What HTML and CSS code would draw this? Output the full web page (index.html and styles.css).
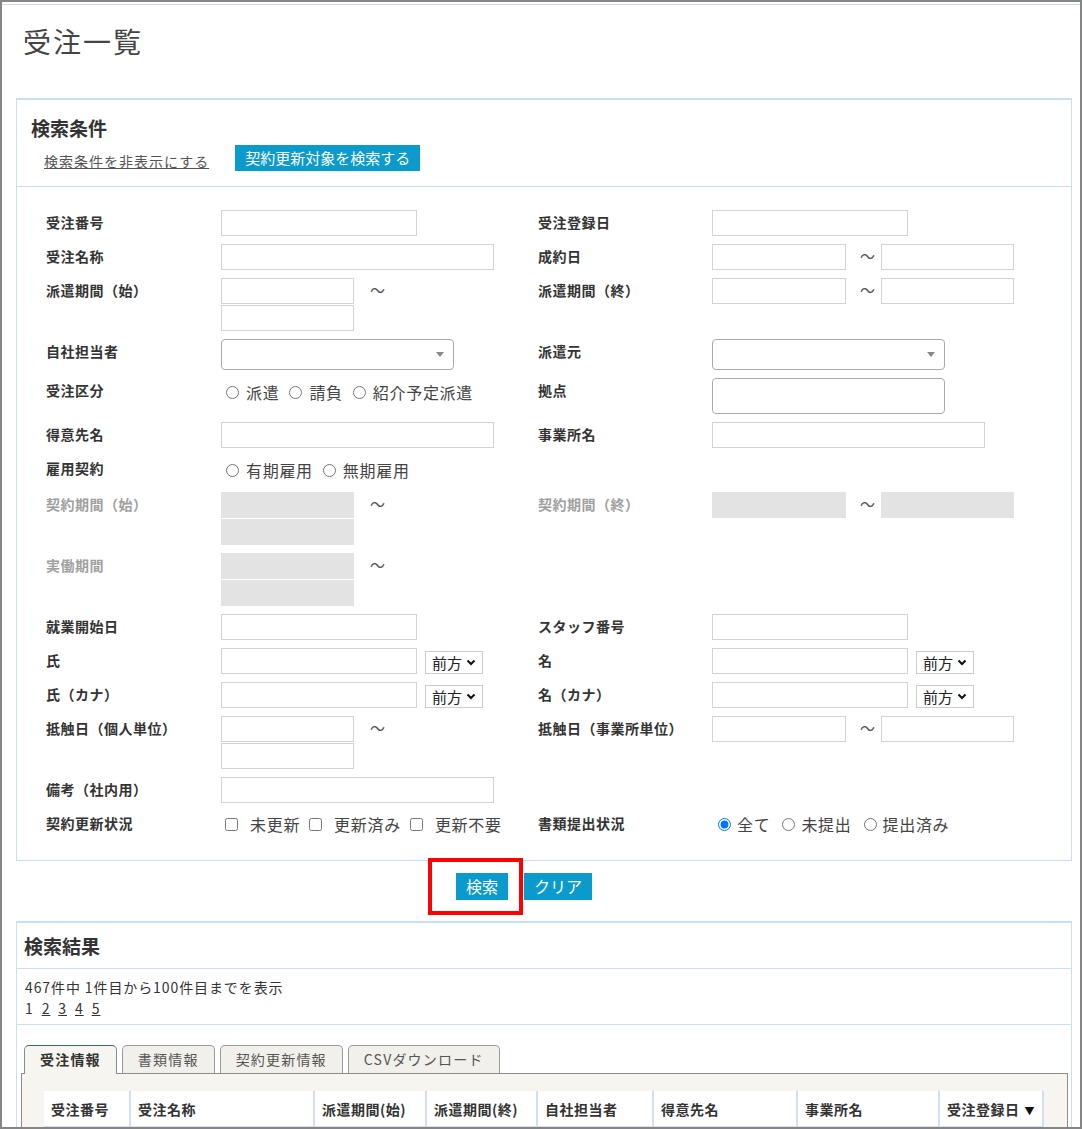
FILE: index.html
```html
<!DOCTYPE html>
<html lang="ja">
<head>
    <meta charset="UTF-8">
    <meta name="viewport" content="width=device-width, initial-scale=1.0">
    <title>受注一覧</title>
    <link rel="stylesheet" href="styles.css">
</head>
<body>
    <div class="frame">
        <div class="page">
            <h1 class="page-title">受注一覧</h1>

            <!-- 検索条件 -->
            <div class="panel">
                <div class="panel-head">
                    <h2 class="panel-title">検索条件</h2>
                    <div class="toolbar">
                        <a href="#" class="toggle-link">検索条件を非表示にする</a>
                        <button class="btn btn-sm">契約更新対象を検索する</button>
                    </div>
                </div>

                <div class="panel-body">
                    <table class="cond">
                        <colgroup>
                            <col class="c-label">
                            <col class="c-field">
                            <col class="c-label2">
                            <col>
                        </colgroup>
                        <tr>
                            <th>受注番号</th>
                            <td><input type="text" class="text w-short"></td>
                            <th>受注登録日</th>
                            <td><input type="text" class="text w-short"></td>
                        </tr>
                        <tr>
                            <th>受注名称</th>
                            <td><input type="text" class="text w-long"></td>
                            <th>成約日</th>
                            <td>
                                <div class="range">
                                    <input type="text" class="text w-date1">
                                    <span class="tilde">～</span>
                                    <input type="text" class="text w-date">
                                </div>
                            </td>
                        </tr>
                        <tr>
                            <th>派遣期間（始）</th>
                            <td>
                                <div class="range stack">
                                    <input type="text" class="text w-date">
                                    <span class="tilde">～</span>
                                    <input type="text" class="text w-date">
                                </div>
                            </td>
                            <th>派遣期間（終）</th>
                            <td>
                                <div class="range">
                                    <input type="text" class="text w-date1">
                                    <span class="tilde">～</span>
                                    <input type="text" class="text w-date">
                                </div>
                            </td>
                        </tr>
                        <tr>
                            <th>自社担当者</th>
                            <td><div class="pick"></div></td>
                            <th>派遣元</th>
                            <td><div class="pick"></div></td>
                        </tr>
                        <tr>
                            <th>受注区分</th>
                            <td>
                                <div class="opts">
                                    <label class="opt"><input type="radio" name="kubun">派遣</label>
                                    <label class="opt"><input type="radio" name="kubun">請負</label>
                                    <label class="opt"><input type="radio" name="kubun">紹介予定派遣</label>
                                </div>
                            </td>
                            <th>拠点</th>
                            <td><input type="text" class="text w-pick"></td>
                        </tr>
                        <tr>
                            <th>得意先名</th>
                            <td><input type="text" class="text w-long"></td>
                            <th>事業所名</th>
                            <td><input type="text" class="text w-long"></td>
                        </tr>
                        <tr>
                            <th>雇用契約</th>
                            <td>
                                <div class="opts">
                                    <label class="opt"><input type="radio" name="koyo">有期雇用</label>
                                    <label class="opt"><input type="radio" name="koyo">無期雇用</label>
                                </div>
                            </td>
                            <td colspan="2"></td>
                        </tr>
                        <tr>
                            <th class="off">契約期間（始）</th>
                            <td>
                                <div class="range stack">
                                    <input type="text" class="text w-date" disabled>
                                    <span class="tilde">～</span>
                                    <input type="text" class="text w-date" disabled>
                                </div>
                            </td>
                            <th class="off">契約期間（終）</th>
                            <td>
                                <div class="range">
                                    <input type="text" class="text w-date1" disabled>
                                    <span class="tilde">～</span>
                                    <input type="text" class="text w-date" disabled>
                                </div>
                            </td>
                        </tr>
                        <tr>
                            <th class="off">実働期間</th>
                            <td>
                                <div class="range stack">
                                    <input type="text" class="text w-date" disabled>
                                    <span class="tilde">～</span>
                                    <input type="text" class="text w-date" disabled>
                                </div>
                            </td>
                            <td colspan="2"></td>
                        </tr>
                        <tr>
                            <th>就業開始日</th>
                            <td><input type="text" class="text w-short"></td>
                            <th>スタッフ番号</th>
                            <td><input type="text" class="text w-short"></td>
                        </tr>
                        <tr>
                            <th>氏</th>
                            <td>
                                <div class="with-mode">
                                    <input type="text" class="text w-short">
                                    <span class="mode">前方<svg width="10" height="7" viewBox="0 0 10 7"><path d="M1.5 1.5 L5 5 L8.5 1.5" fill="none" stroke="#111" stroke-width="2"/></svg></span>
                                </div>
                            </td>
                            <th>名</th>
                            <td>
                                <div class="with-mode">
                                    <input type="text" class="text w-short">
                                    <span class="mode">前方<svg width="10" height="7" viewBox="0 0 10 7"><path d="M1.5 1.5 L5 5 L8.5 1.5" fill="none" stroke="#111" stroke-width="2"/></svg></span>
                                </div>
                            </td>
                        </tr>
                        <tr>
                            <th>氏（カナ）</th>
                            <td>
                                <div class="with-mode">
                                    <input type="text" class="text w-short">
                                    <span class="mode">前方<svg width="10" height="7" viewBox="0 0 10 7"><path d="M1.5 1.5 L5 5 L8.5 1.5" fill="none" stroke="#111" stroke-width="2"/></svg></span>
                                </div>
                            </td>
                            <th>名（カナ）</th>
                            <td>
                                <div class="with-mode">
                                    <input type="text" class="text w-short">
                                    <span class="mode">前方<svg width="10" height="7" viewBox="0 0 10 7"><path d="M1.5 1.5 L5 5 L8.5 1.5" fill="none" stroke="#111" stroke-width="2"/></svg></span>
                                </div>
                            </td>
                        </tr>
                        <tr>
                            <th>抵触日（個人単位）</th>
                            <td>
                                <div class="range stack">
                                    <input type="text" class="text w-date">
                                    <span class="tilde">～</span>
                                    <input type="text" class="text w-date">
                                </div>
                            </td>
                            <th>抵触日（事業所単位）</th>
                            <td>
                                <div class="range">
                                    <input type="text" class="text w-date1">
                                    <span class="tilde">～</span>
                                    <input type="text" class="text w-date">
                                </div>
                            </td>
                        </tr>
                        <tr>
                            <th>備考（社内用）</th>
                            <td><input type="text" class="text w-long"></td>
                            <td colspan="2"></td>
                        </tr>
                        <tr>
                            <th>契約更新状況</th>
                            <td>
                                <div class="opts checks">
                                    <label class="opt"><input type="checkbox">未更新</label>
                                    <label class="opt"><input type="checkbox">更新済み</label>
                                    <label class="opt"><input type="checkbox">更新不要</label>
                                </div>
                            </td>
                            <th>書類提出状況</th>
                            <td>
                                <div class="opts right">
                                    <label class="opt"><input type="radio" name="shorui" checked>全て</label>
                                    <label class="opt"><input type="radio" name="shorui">未提出</label>
                                    <label class="opt"><input type="radio" name="shorui">提出済み</label>
                                </div>
                            </td>
                        </tr>
                    </table>
                </div>
            </div>

            <div class="search-actions">
                <span class="highlight"><button class="btn">検索</button></span>
                <button class="btn">クリア</button>
            </div>

            <!-- 検索結果 -->
            <div class="panel">
                <div class="panel-head result-head">
                    <h2 class="panel-title">検索結果</h2>
                </div>
                <div class="summary">
                    <div>467件中 1件目から100件目までを表示</div>
                    <div class="pager">1<a href="#">2</a><a href="#">3</a><a href="#">4</a><a href="#">5</a></div>
                </div>
                <div class="tab-area">
                    <ul class="tabs">
                        <li class="tab active">受注情報</li>
                        <li class="tab">書類情報</li>
                        <li class="tab">契約更新情報</li>
                        <li class="tab">CSVダウンロード</li>
                    </ul>
                    <div class="tab-body">
                        <table class="result-table">
                            <tr>
                                <th class="w1">受注番号</th>
                                <th class="w2">受注名称</th>
                                <th class="w3">派遣期間(始)</th>
                                <th class="w4">派遣期間(終)</th>
                                <th class="w5">自社担当者</th>
                                <th class="w6">得意先名</th>
                                <th class="w7">事業所名</th>
                                <th class="w8">受注登録日<span class="sort">▼</span></th>
                            </tr>
                        </table>
                    </div>
                </div>
            </div>
        </div>
    </div>
</body>
</html>
```

FILE: styles.css
```css
* {
    box-sizing: border-box;
}

body {
    margin: 0;
    font-family: "Noto Sans CJK JP", "Liberation Sans", sans-serif;
    color: #333;
    background: #fff;
}

.frame {
    height: 1129px;
    border: 2px solid #858585;
    overflow: hidden;
}

.page {
    margin-top: 2px;
    border-top: 1px solid #c9dff3;
    padding: 0 8px 0 14px;
}

.page-title {
    margin: 0 0 37px 7px;
    padding-top: 16px;
    font-size: 28px;
    font-weight: normal;
    line-height: 40px;
    letter-spacing: 2px;
    color: #444;
}

/* panels */
.panel {
    border: 1px solid #c9dff3;
    border-top-width: 2px;
    background: #fff;
}

.panel-head {
    padding: 15px 14px 15px;
    border-bottom: 1px solid #c9dff3;
}

.panel-title {
    margin: 0;
    font-size: 19px;
    font-weight: bold;
    line-height: 26px;
    color: #333;
}

.toolbar {
    display: flex;
    align-items: flex-end;
    gap: 26px;
    margin-top: 4px;
    padding-left: 13px;
}

.toggle-link {
    font-size: 14px;
    line-height: 20px;
    letter-spacing: 1px;
    color: #555;
}

.btn {
    height: 27px;
    padding: 0 10px;
    border: none;
    background: #0a9acb;
    color: #fff;
    font-family: inherit;
    font-size: 16px;
    line-height: 27px;
    cursor: pointer;
}

.btn-sm {
    height: 26px;
    font-size: 15px;
    line-height: 26px;
}

.panel-body {
    padding: 19px 14px 19px 29px;
}

/* condition form */
.cond {
    width: 100%;
    table-layout: fixed;
    border-collapse: collapse;
}

.c-label { width: 175px; }
.c-field { width: 317px; }
.c-label2 { width: 174px; }

.cond th {
    padding: 4px 0;
    text-align: left;
    vertical-align: top;
    font-size: 14px;
    font-weight: bold;
    line-height: 24px;
    letter-spacing: 0.5px;
    color: #333;
    white-space: nowrap;
}

.cond th.off {
    color: #a0a0a0;
}

.cond td {
    padding: 4px 0;
    vertical-align: top;
}

.text {
    display: block;
    height: 26px;
    margin: 0;
    padding: 2px 4px;
    border: 1px solid #d3d3d3;
    background: #fff;
    font-family: inherit;
    font-size: 14px;
}

.text:disabled {
    background: #e3e3e3;
    border-color: #e3e3e3;
}

.w-short { width: 196px; }
.w-long { width: 273px; }
.w-date { width: 133px; }
.w-date1 { width: 134px; }

.w-pick {
    width: 233px;
    height: 36px;
    border-color: #aaa;
    border-radius: 4px;
}

.range {
    display: flex;
    align-items: flex-start;
}

.range .tilde {
    margin: 0 6px 0 14px;
    font-size: 15px;
    line-height: 24px;
    color: #555;
}

.range.stack {
    flex-wrap: wrap;
    width: 180px;
}

.range.stack .tilde {
    margin: 0 0 0 16px;
}

.range.stack .text:last-child {
    margin-top: 1px;
}

.pick {
    display: flex;
    align-items: center;
    justify-content: flex-end;
    width: 233px;
    height: 31px;
    padding-right: 9px;
    border: 1px solid #aaa;
    border-radius: 4px;
    background: #fff;
}

.pick::after {
    content: "";
    border-left: 4px solid transparent;
    border-right: 4px solid transparent;
    border-top: 5px solid #888;
}

.with-mode {
    display: flex;
    align-items: flex-end;
    gap: 8px;
}

.mode {
    display: flex;
    align-items: center;
    gap: 4px;
    width: 58px;
    height: 23px;
    padding-left: 6px;
    border: 1px solid #ccc;
    font-size: 15px;
    color: #222;
}

.opts {
    display: flex;
    align-items: center;
    height: 28px;
    padding-left: 5px;
    font-size: 16px;
    letter-spacing: 0.7px;
    color: #444;
}

.opt {
    display: flex;
    align-items: center;
    gap: 7px;
    margin-right: 10px;
}

.opt input {
    width: 13px;
    height: 13px;
    margin: 0;
}

.opts.checks {
    height: 26px;
    padding-left: 4px;
}

.opts.checks .opt {
    gap: 12px;
    margin-right: 9px;
}

.opts.right {
    height: 26px;
    padding-left: 6px;
}

.opts.right .opt {
    gap: 6px;
    margin-right: 12px;
}

/* search buttons */
.search-actions {
    display: flex;
    gap: 16px;
    padding: 12px 0 21px 440px;
}

.highlight {
    position: relative;
    display: flex;
}

.highlight::before {
    content: "";
    position: absolute;
    left: -28px;
    right: -15px;
    top: -15px;
    bottom: -15px;
    border: 4px solid #ff0000;
}

/* results */
.result-head {
    padding: 10px 7px 9px;
}

.summary {
    padding: 8px 8px 5px;
    border-bottom: 1px solid #c9dff3;
    font-size: 14px;
    line-height: 21px;
    letter-spacing: 0.9px;
    color: #333;
}

.pager a {
    margin-left: 8px;
    color: #333;
}

.tab-area {
    padding: 20px 3px 0 4px;
}

.tabs {
    display: flex;
    align-items: flex-end;
    gap: 5px;
    height: 28px;
    margin: 0 0 0 3px;
    padding: 0;
    list-style: none;
}

.tab {
    height: 28px;
    padding: 0 15px;
    border: 1px solid #9a9a9a;
    border-bottom: none;
    border-radius: 5px 5px 0 0;
    background: #f2f0eb;
    font-size: 14px;
    line-height: 27px;
    letter-spacing: 1.2px;
    color: #555;
}

.tab.active {
    position: relative;
    height: 29px;
    margin-bottom: -1px;
    border-color: #7d8f8f;
    border-top-color: #3e6767;
    background: #f7f5f0;
    font-weight: bold;
    color: #333;
}

.tab-body {
    height: 200px;
    padding: 17px 0 0 22px;
    border: 1px solid #8c8c8c;
    background: #f7f5f0;
}

.result-table {
    border-collapse: collapse;
    table-layout: fixed;
    background: #fff;
}

.result-table th {
    height: 36px;
    padding: 0 7px;
    border-right: 2px solid #cfe1f2;
    border-bottom: 2px solid #cfe1f2;
    text-align: left;
    font-size: 14px;
    font-weight: bold;
    letter-spacing: 0.5px;
    color: #333;
    white-space: nowrap;
}

.result-table .w1 { width: 86px; }
.result-table .w2 { width: 184px; }
.result-table .w3 { width: 112px; }
.result-table .w4 { width: 111px; }
.result-table .w5 { width: 116px; }
.result-table .w6 { width: 144px; }
.result-table .w7 { width: 142px; }
.result-table .w8 { width: 103px; }

.sort {
    margin-left: 5px;
    font-size: 10px;
    color: #111;
}
```
